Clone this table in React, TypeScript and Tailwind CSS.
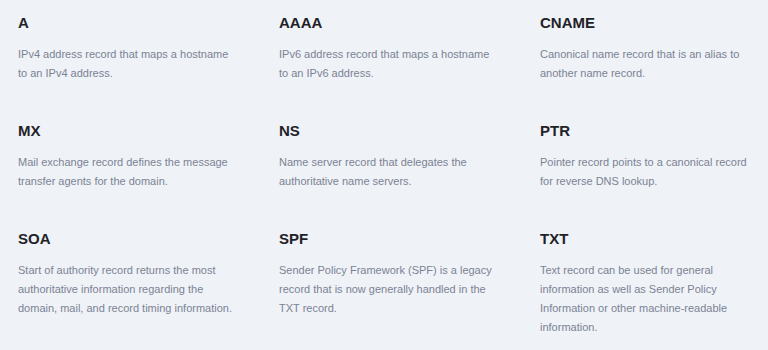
const records = [
  { name: 'A', text: 'IPv4 address record that maps a hostname to an IPv4 address.' },
  { name: 'AAAA', text: 'IPv6 address record that maps a hostname to an IPv6 address.' },
  { name: 'CNAME', text: 'Canonical name record that is an alias to another name record.' },
  { name: 'MX', text: 'Mail exchange record defines the message transfer agents for the domain.' },
  { name: 'NS', text: 'Name server record that delegates the authoritative name servers.' },
  { name: 'PTR', text: 'Pointer record points to a canonical record for reverse DNS lookup.' },
  { name: 'SOA', text: 'Start of authority record returns the most authoritative information regarding the domain, mail, and record timing information.' },
  { name: 'SPF', text: 'Sender Policy Framework (SPF) is a legacy record that is now generally handled in the TXT record.' },
  { name: 'TXT', text: 'Text record can be used for general information as well as Sender Policy Information or other machine-readable information.' },
];

export default function App() {
  return (
    <div
      className="w-[768px] h-[350px] overflow-hidden bg-[#eff2f7] pl-[18px] pt-[13px]"
      style={{ fontFamily: '"Liberation Sans", Arial, sans-serif' }}
    >
      <div className="grid grid-cols-[220px_220px_220px] gap-x-[41px] gap-y-[38px]">
        {records.map(r => (
          <div key={r.name}>
            <h3 className="text-[15px] leading-[20px] font-bold text-[#1f2328]">{r.name}</h3>
            <p className="mt-[12px] text-[11px] leading-[19px] text-[#7b8394]">{r.text}</p>
          </div>
        ))}
      </div>
    </div>
  );
}
